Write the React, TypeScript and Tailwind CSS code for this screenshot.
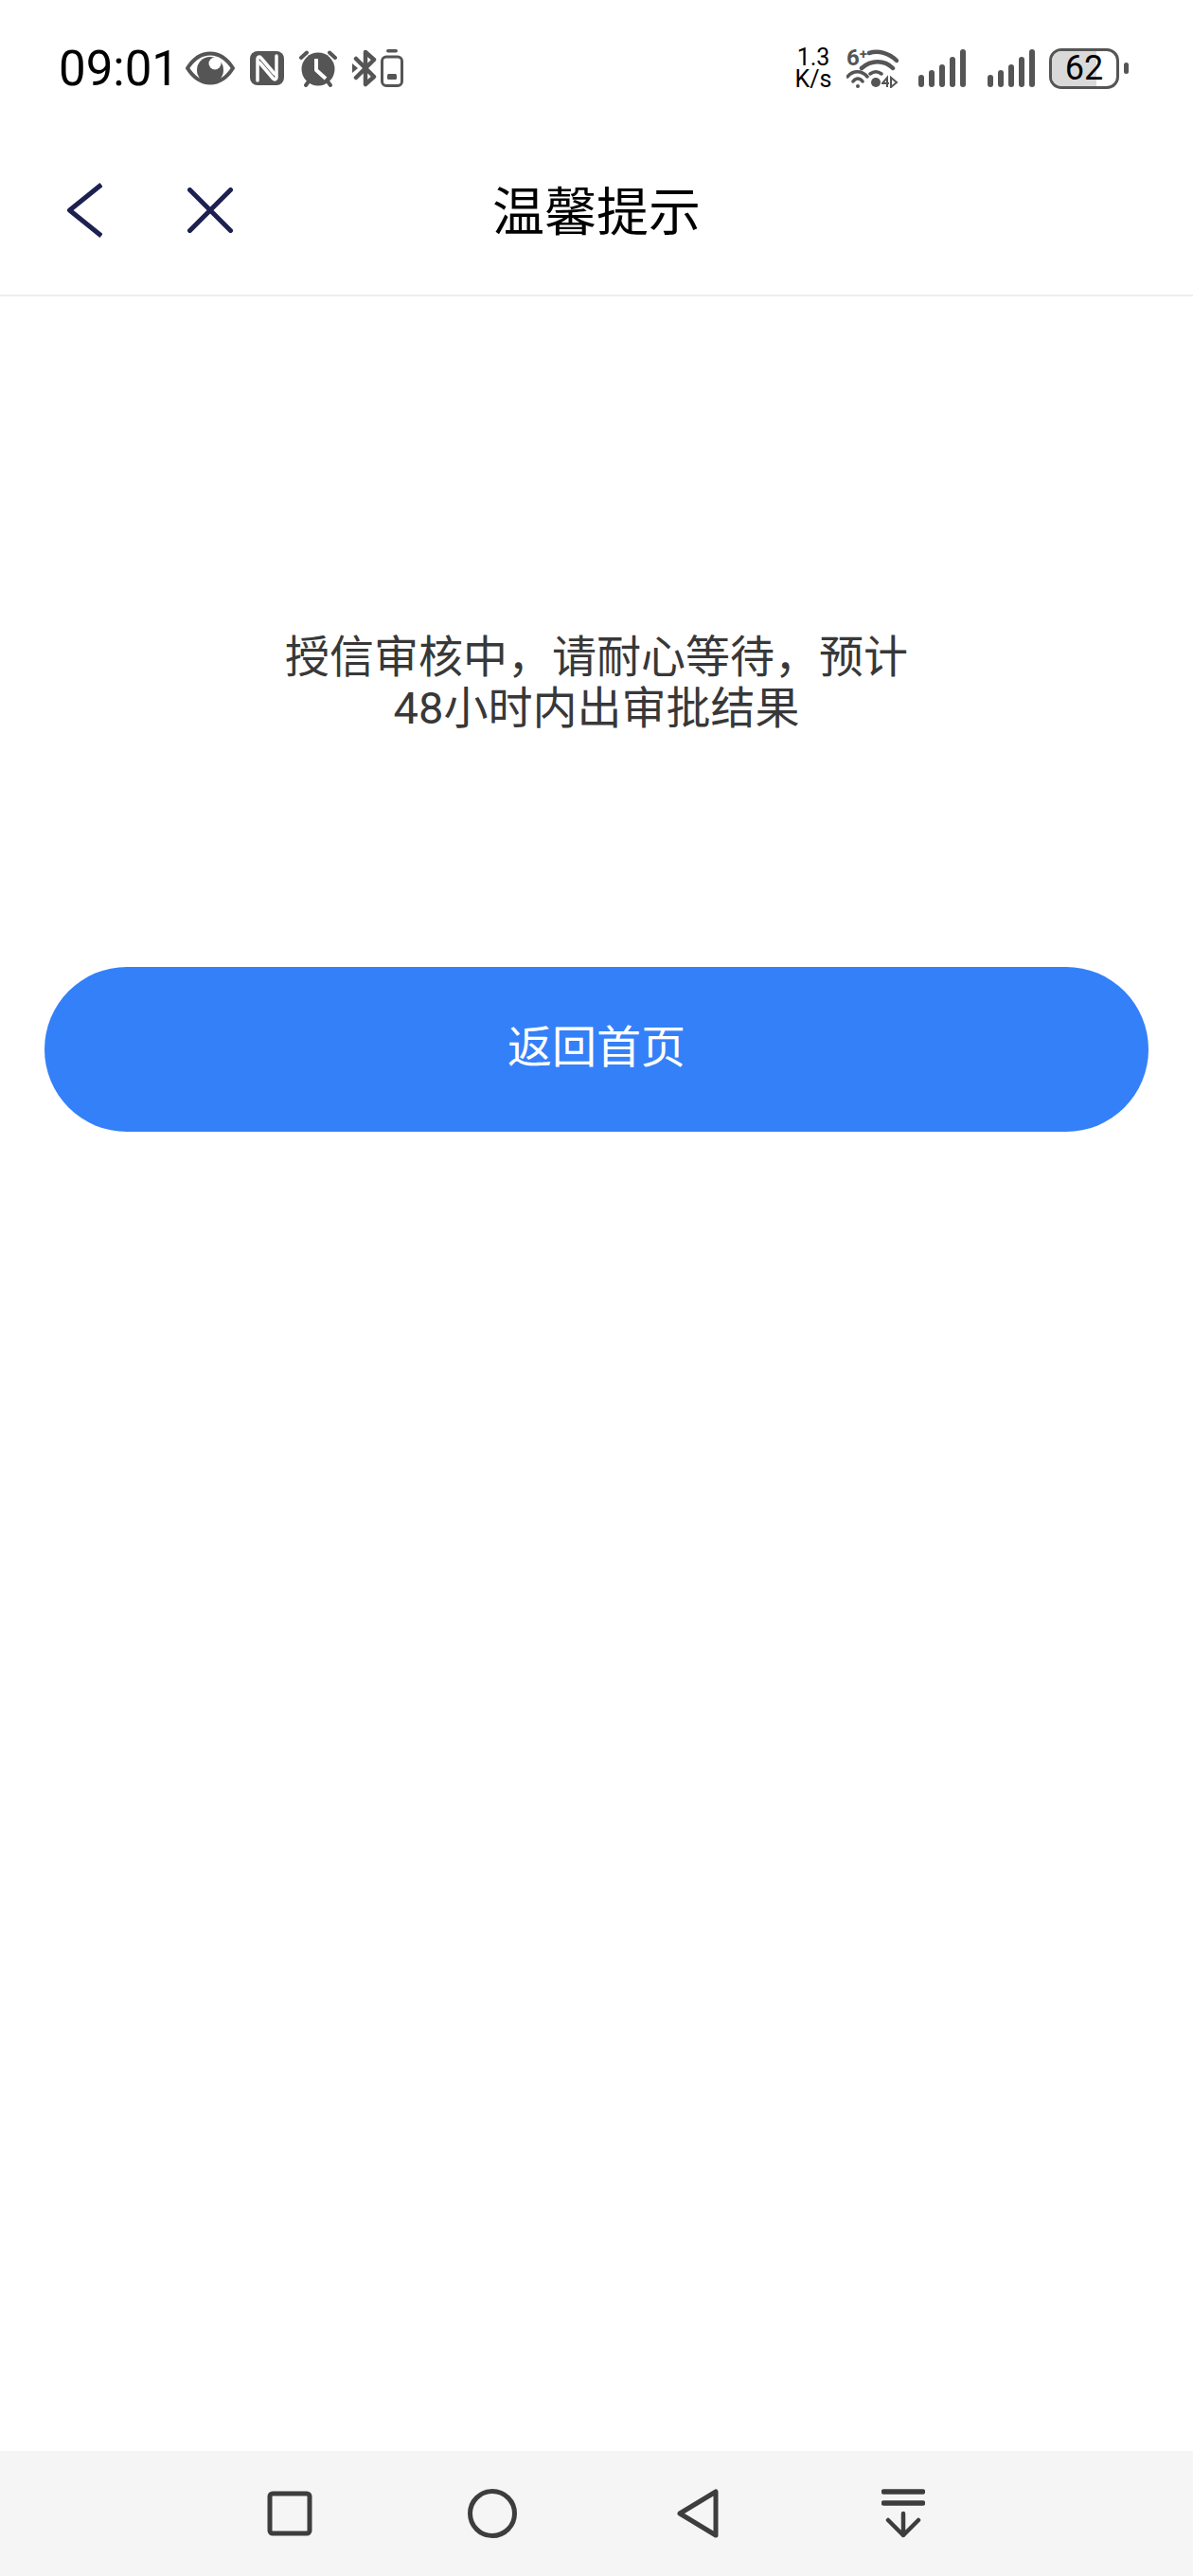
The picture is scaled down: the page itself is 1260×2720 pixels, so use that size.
import React from 'react';

const FONT = 'font-["Roboto","Noto_Sans_CJK_SC",sans-serif]';

const EyeIcon = () => (
  <svg width="52" height="36" viewBox="0 0 52 36" className="text-[#555]">
    <path d="M2 18C9 7 17 2.500 26 2.500S43 7 50 18C43 29 35 33.500 26 33.500S9 29 2 18Z" fill="none" stroke="currentColor" strokeWidth="4" strokeLinejoin="round" />
    <circle cx="26" cy="20" r="14" fill="currentColor" />
    <circle cx="31" cy="13" r="6.500" fill="#fff" />
  </svg>
);

const NfcIcon = () => (
  <svg width="36" height="36" viewBox="0 0 36 36" className="text-[#555]">
    <rect width="36" height="36" rx="8" fill="currentColor" />
    <path d="M8 31V8C8 6 10 5.500 11.500 7L26 24" fill="none" stroke="#fff" strokeWidth="3.500" strokeLinecap="round" strokeLinejoin="round" />
    <path d="M28 5V28C28 30 26 30.500 24.500 29L10 12" fill="none" stroke="#fff" strokeWidth="3.500" strokeLinecap="round" strokeLinejoin="round" />
  </svg>
);

const AlarmIcon = () => (
  <svg width="40" height="40" viewBox="1 0 40 40" className="text-[#555]">
    <circle cx="21" cy="21" r="17.500" fill="currentColor" />
    <path d="M3 9L9 3.500M39 9L33 3.500M8 38L11 34M34 38L31 34" stroke="currentColor" strokeWidth="4" strokeLinecap="round" />
    <path d="M19 10V22L29 31" fill="none" stroke="#fff" strokeWidth="4" strokeLinejoin="round" />
  </svg>
);

const BluetoothBatteryIcon = () => (
  <div className="flex items-center gap-[4px] text-[#555]">
    <svg width="26" height="40" viewBox="0 0 26 40">
      <path d="M4 10L23 29L14 37V3L23 11L4 30" fill="none" stroke="currentColor" strokeWidth="4.500" strokeLinecap="round" strokeLinejoin="round" />
      <path d="M0 15L6 20L0 25Z" fill="currentColor" />
    </svg>
    <svg width="24" height="40" viewBox="0 0 24 40">
      <rect x="6" y="0" width="12" height="3.500" rx="1.750" fill="currentColor" />
      <rect x="1.500" y="8" width="21" height="30.500" rx="4.500" fill="none" stroke="currentColor" strokeWidth="3" />
      <rect x="7" y="26" width="10" height="6" rx="1.500" fill="currentColor" />
    </svg>
  </div>
);

const WifiIcon = () => (
  <svg width="55" height="50" viewBox="0 -8 55 50" className="text-[#555] mt-[-8px]">
    <text x="0" y="18" fontFamily="Roboto, sans-serif" fontSize="24" fontWeight="700" fill="currentColor">
      6<tspan fontSize="15" dy="-7">+</tspan>
    </text>
    <path d="M24 5C34 2 45 5 53 13M16 21C26 12 40 12 49 21" fill="none" stroke="currentColor" strokeWidth="4.500" strokeLinecap="round" />
    <path d="M1 30C7 23 16 23 22 30M7 35C10 31 14 31 17 35M25 27C29 24 33 24 37 27" fill="none" stroke="currentColor" strokeWidth="3.500" strokeLinecap="round" />
    <circle cx="12" cy="40" r="2" fill="currentColor" />
    <circle cx="31" cy="36" r="5" fill="currentColor" />
    <path d="M38 37L43 31V41M37 37H45M47 31V41L53 36Z" fill="none" stroke="currentColor" strokeWidth="2" />
  </svg>
);

const SignalIcon = () => (
  <svg width="50" height="40" viewBox="0 0 50 40" className="text-[#555]">
    <rect x="0" y="27" width="6" height="13" rx="3" fill="currentColor" />
    <rect x="11" y="22" width="6" height="18" rx="3" fill="currentColor" />
    <rect x="22" y="16" width="6" height="24" rx="3" fill="currentColor" />
    <rect x="33" y="8" width="6" height="32" rx="3" fill="currentColor" />
    <rect x="44" y="0" width="6" height="40" rx="3" fill="currentColor" />
  </svg>
);

const StatusBar = () => (
  <div className="h-[132px] pt-[12px] pl-[62px] pr-[68px] flex items-center justify-between">
    <div className="flex items-center">
      <span className="text-[51px] leading-none text-black w-[134px]">09:01</span>
      <div className="flex items-center gap-[16px]">
        <EyeIcon />
        <NfcIcon />
        <AlarmIcon />
        <BluetoothBatteryIcon />
      </div>
    </div>
    <div className="flex items-center">
      <div className="text-[25px] leading-[23px] text-black text-center w-[44px] mr-[13px]">
        1.3
        <br />
        K/s
      </div>
      <WifiIcon />
      <div className="flex items-center gap-[23px] ml-[21px] mr-[15px]">
        <SignalIcon />
        <SignalIcon />
      </div>
      <div className="flex items-center gap-[5px]">
        <div className="relative w-[74px] h-[43px] rounded-[13px] border-[3px] border-[#555] overflow-hidden flex items-center justify-center">
          <div className="absolute left-0 top-0 bottom-0 w-[47px] bg-[#d9d9d9]" />
          <span className="relative text-[36px] leading-none text-black">62</span>
        </div>
        <div className="w-[5px] h-[12px] rounded-full bg-[#555]" />
      </div>
    </div>
  </div>
);

const Header = () => (
  <div className="h-[181px] grid grid-cols-[1fr_auto_1fr] items-center border-b-2 border-[#eeeeee]">
    <div className="flex items-center pl-[70px]">
      <svg width="38" height="58" viewBox="0 0 38 58" className="text-[#1c2150]">
        <path d="M37 2L3.500 29L37 56" fill="none" stroke="currentColor" strokeWidth="5" strokeLinejoin="round" />
      </svg>
      <svg width="48" height="48" viewBox="0 0 48 48" className="ml-[90px] text-[#1c2150]">
        <path d="M2.500 2.500L45.500 45.500M45.500 2.500L2.500 45.500" fill="none" stroke="currentColor" strokeWidth="5" strokeLinecap="round" />
      </svg>
    </div>
    <h1 className="text-[55px] leading-none font-normal text-black pt-[5px]">温馨提示</h1>
    <div />
  </div>
);

const NavBar = () => (
  <div className="h-[132px] bg-[#f5f5f5] flex items-center pl-[282px] text-[#3d3d3d]">
    <svg width="48" height="48" viewBox="0 0 48 48">
      <rect x="3" y="3" width="42" height="42" rx="3" fill="none" stroke="currentColor" strokeWidth="5" />
    </svg>
    <svg width="52" height="52" viewBox="0 0 52 52" className="ml-[164px]">
      <circle cx="26" cy="26" r="23.500" fill="none" stroke="currentColor" strokeWidth="5" />
    </svg>
    <svg width="44" height="52" viewBox="0 0 44 52" className="ml-[169px]">
      <path d="M41 3V49L3 26Z" fill="none" stroke="currentColor" strokeWidth="5" strokeLinejoin="round" />
    </svg>
    <svg width="46" height="52" viewBox="0 0 46 52" className="ml-[172px]">
      <path d="M2.500 3H43.500M2.500 15H43.500" fill="none" stroke="currentColor" strokeWidth="5.500" strokeLinecap="round" />
      <path d="M23 26V49M7 33L23 49L39 33" fill="none" stroke="currentColor" strokeWidth="4.500" strokeLinecap="round" strokeLinejoin="round" />
    </svg>
  </div>
);

export default function App() {
  return (
    <div className={`h-[2720px] w-[1260px] bg-white flex flex-col ${FONT}`}>
      <StatusBar />
      <Header />
      <main className="flex-1 px-[47px] pt-[354px]">
        <p className="text-center text-[47px] leading-[54px] text-[#383838]">
          授信审核中，请耐心等待，预计
          <br />
          48小时内出审批结果
        </p>
        <button className="mt-[246px] w-full h-[174px] rounded-full bg-[#3480f8] text-white text-[47px] leading-none pb-[6px]">
          返回首页
        </button>
      </main>
      <NavBar />
    </div>
  );
}
